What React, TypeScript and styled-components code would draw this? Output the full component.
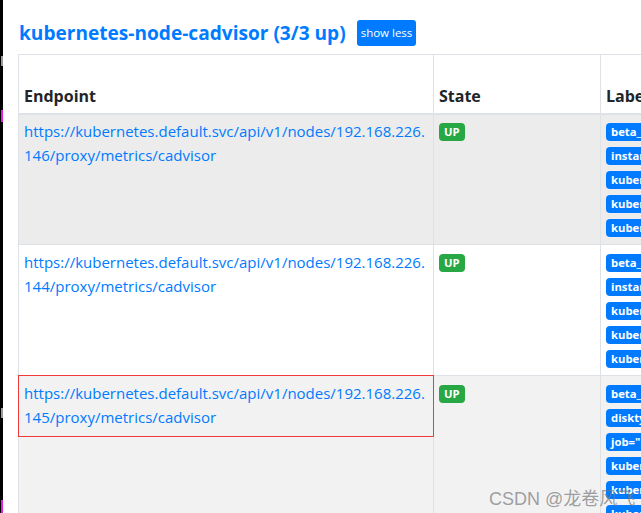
import React from "react";
import styled, { createGlobalStyle } from "styled-components";

const Global = createGlobalStyle`
  html, body { margin: 0; padding: 0; background: #fff; overflow: hidden; }
  body { font-family: "Open Sans", "Noto Sans", sans-serif; color: #212529; }
`;

const Page = styled.div`
  position: relative;
  display: flex;
  width: 641px;
  height: 513px;
  overflow: hidden;
  background: #fff;
`;

const Edge = styled.div`
  position: relative;
  flex: none;
  width: 3px;
  background: #000;
`;

const EdgeMark = styled.span<{ $top: number; $h: number; $color: string }>`
  position: absolute;
  right: 0;
  top: ${(p) => p.$top}px;
  width: 2px;
  height: ${(p) => p.$h}px;
  background: ${(p) => p.$color};
`;

const Content = styled.div`
  flex: none;
  padding: 20px 0 0 15px;
`;

const TitleRow = styled.div`
  display: flex;
  align-items: center;
  gap: 11px;
  height: 26px;
  margin: 0 0 8px 1px;
`;

const Title = styled.h2`
  margin: 0;
  font-size: 19.1px;
  font-weight: 700;
  color: #007bff;
  line-height: 26px;
  white-space: nowrap;
`;

const SmallButton = styled.button`
  height: 26px;
  padding: 0 4px;
  border: none;
  border-radius: 3px;
  background: #007bff;
  color: #fff;
  font-family: inherit;
  font-size: 11.5px;
  line-height: 26px;
`;

const Table = styled.table`
  border-collapse: collapse;
  table-layout: fixed;
  width: 1100px;
`;

const HeadCell = styled.th`
  height: 48px;
  padding: 4.8px 5px;
  border: 1px solid #dee2e6;
  border-bottom-width: 2px;
  vertical-align: bottom;
  text-align: left;
  font-size: 16px;
  font-weight: 700;
  line-height: 24px;
`;

const Row = styled.tr<{ $bg: string }>`
  background: ${(p) => p.$bg};
`;

const Cell = styled.td`
  position: relative;
  padding: 4.8px 5px;
  border: 1px solid #dee2e6;
  vertical-align: top;
  font-size: 15px;
  line-height: 24px;
`;

const EndpointLink = styled.a`
  color: #007bff;
  text-decoration: none;
  white-space: nowrap;
`;

const Highlight = styled.span`
  position: absolute;
  left: -1px;
  right: -1px;
  top: -1px;
  height: 60px;
  border: 1px solid #f03a3a;
  pointer-events: none;
`;

const LabelLine = styled.div`
  display: flex;
  gap: 4px;
  height: 24px;
  padding-top: 4px;
  box-sizing: border-box;
  white-space: nowrap;
`;

const Badge = styled.span<{ $bg: string }>`
  display: inline-block;
  height: 18px;
  padding: 0 5px;
  border-radius: 4px;
  background: ${(p) => p.$bg};
  color: #fff;
  font-size: 11.3px;
  font-weight: 700;
  line-height: 18px;
`;

const Watermark = styled.div`
  position: absolute;
  left: 489px;
  top: 484px;
  font-family: "Liberation Sans", "Noto Sans CJK SC", sans-serif;
  font-size: 18px;
  color: rgba(120, 120, 120, 0.7);
  white-space: nowrap;
  pointer-events: none;
`;

type Target = {
  ip: string;
  bg: string;
  highlight?: boolean;
  lines: string[][];
};

const targets: Target[] = [
  {
    ip: "146",
    bg: "#ececec",
    lines: [
      ['beta_kubernetes_io_arch="amd64"', 'beta_kubernetes_io_os="linux"'],
      ['instance="k8s-node2"', 'job="kubernetes-node-cadvisor"'],
      ['kubernetes_io_arch="amd64"'],
      ['kubernetes_io_hostname="k8s-node2"'],
      ['kubernetes_io_os="linux"'],
    ],
  },
  {
    ip: "144",
    bg: "#ffffff",
    lines: [
      ['beta_kubernetes_io_arch="amd64"', 'beta_kubernetes_io_os="linux"'],
      ['instance="k8s-master"', 'job="kubernetes-node-cadvisor"'],
      ['kubernetes_io_arch="amd64"'],
      ['kubernetes_io_hostname="k8s-master"'],
      ['kubernetes_io_os="linux"'],
    ],
  },
  {
    ip: "145",
    bg: "#f2f2f2",
    highlight: true,
    lines: [
      ['beta_kubernetes_io_arch="amd64"', 'beta_kubernetes_io_os="linux"'],
      ['disktype="ssd"', 'instance="k8s-node1"'],
      ['job="kubernetes-node-cadvisor"'],
      ['kubernetes_io_arch="amd64"'],
      ['kubernetes_io_hostname="k8s-node1"'],
      ['kubernetes_io_os="linux"'],
    ],
  },
];

export default function App() {
  return (
    <>
      <Global />
      <Page>
        <Edge>
          <EdgeMark $top={56} $h={10} $color="#9a9a9a" />
          <EdgeMark $top={110} $h={12} $color="#e020e0" />
          <EdgeMark $top={408} $h={10} $color="#9a9a9a" />
          <EdgeMark $top={500} $h={13} $color="#e020e0" />
        </Edge>
        <Content>
          <TitleRow>
            <Title>kubernetes-node-cadvisor (3/3 up)</Title>
            <SmallButton>show less</SmallButton>
          </TitleRow>
          <Table>
            <colgroup>
              <col style={{ width: 415 }} />
              <col style={{ width: 167 }} />
              <col style={{ width: 518 }} />
            </colgroup>
            <thead>
              <tr>
                <HeadCell>Endpoint</HeadCell>
                <HeadCell>State</HeadCell>
                <HeadCell>Labels</HeadCell>
              </tr>
            </thead>
            <tbody>
              {targets.map((t) => (
                <Row key={t.ip} $bg={t.bg}>
                  <Cell>
                    <EndpointLink href="#">
                      https://kubernetes.default.svc/api/v1/nodes/192.168.226.
                      <br />
                      {t.ip}/proxy/metrics/cadvisor
                    </EndpointLink>
                    {t.highlight && <Highlight />}
                  </Cell>
                  <Cell>
                    <LabelLine>
                      <Badge $bg="#28a745">UP</Badge>
                    </LabelLine>
                  </Cell>
                  <Cell>
                    {t.lines.map((line, i) => (
                      <LabelLine key={i}>
                        {line.map((l) => (
                          <Badge key={l} $bg="#007bff">
                            {l}
                          </Badge>
                        ))}
                      </LabelLine>
                    ))}
                  </Cell>
                </Row>
              ))}
            </tbody>
          </Table>
        </Content>
        <Watermark>CSDN @龙卷风飞</Watermark>
      </Page>
    </>
  );
}
